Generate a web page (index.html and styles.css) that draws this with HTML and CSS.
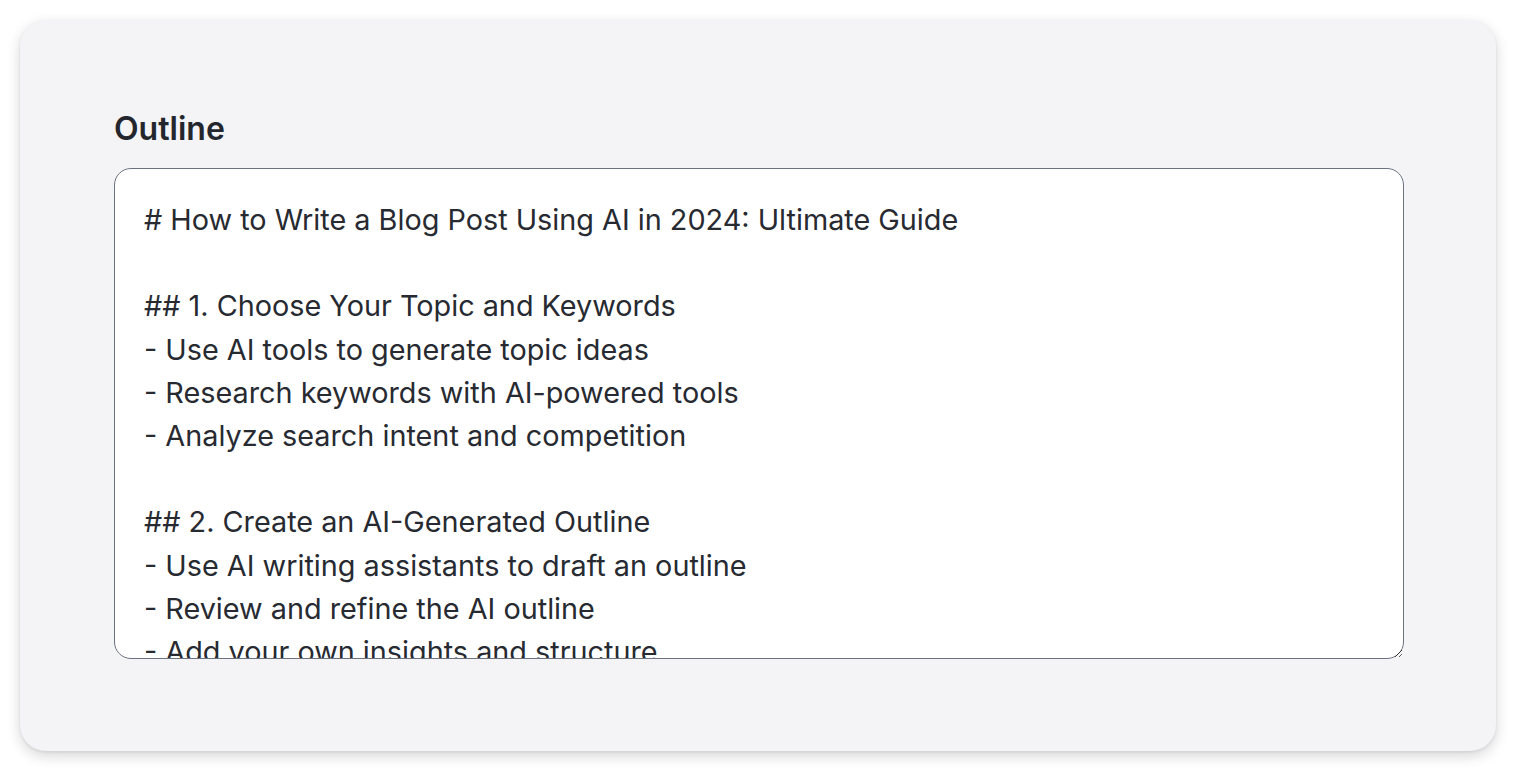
FILE: index.html
```html
<!DOCTYPE html>
<html>
<head>
    <meta charset="utf-8" />
    <title>Outline</title>
    <link rel="stylesheet" href="styles.css">
</head>
<body>
    <div class="card">
        <label class="field-label" for="outline">Outline</label>
        <textarea id="outline" class="outline-input" spellcheck="false"># How to Write a Blog Post Using AI in 2024: Ultimate Guide

## 1. Choose Your Topic and Keywords
- Use AI tools to generate topic ideas
- Research keywords with AI-powered tools
- Analyze search intent and competition

## 2. Create an AI-Generated Outline
- Use AI writing assistants to draft an outline
- Review and refine the AI outline
- Add your own insights and structure

## 3. Write the First Draft with AI
- Generate sections one at a time
- Keep your brand voice consistent
- Fact-check every claim

## 4. Edit and Optimize
- Improve readability and flow
- Optimize for SEO
- Add images, links and a clear call to action</textarea>
    </div>
</body>
</html>
```

FILE: styles.css
```css
*
{
    box-sizing: border-box;
}

body
{
    margin: 0;
    background: #ffffff;
    font-family: Inter, 'Noto Sans', sans-serif;
}

.card
{
    margin: 20px;
    height: 731px;
    padding: 85px 92px 92px 94px;
    background: #f4f4f6;
    border-radius: 26px;
    box-shadow: 0 5px 14px rgba(0, 0, 0, 0.16), 0 1px 3px rgba(0, 0, 0, 0.08);
    display: flex;
    flex-direction: column;
}

.field-label
{
    display: block;
    font-size: 32px;
    line-height: 48px;
    font-weight: 600;
    color: #23262d;
    margin-bottom: 15px;
}

.outline-input
{
    display: block;
    width: 100%;
    height: 491px;
    padding: 29px 29px 27px;
    border: 1px solid #6b7280;
    border-radius: 17px;
    background: #ffffff;
    font-family: Inter, 'Noto Sans', sans-serif;
    font-size: 28.8px;
    line-height: 43.2px;
    color: #272a31;
    outline: none;
    overflow: hidden;
}
```
